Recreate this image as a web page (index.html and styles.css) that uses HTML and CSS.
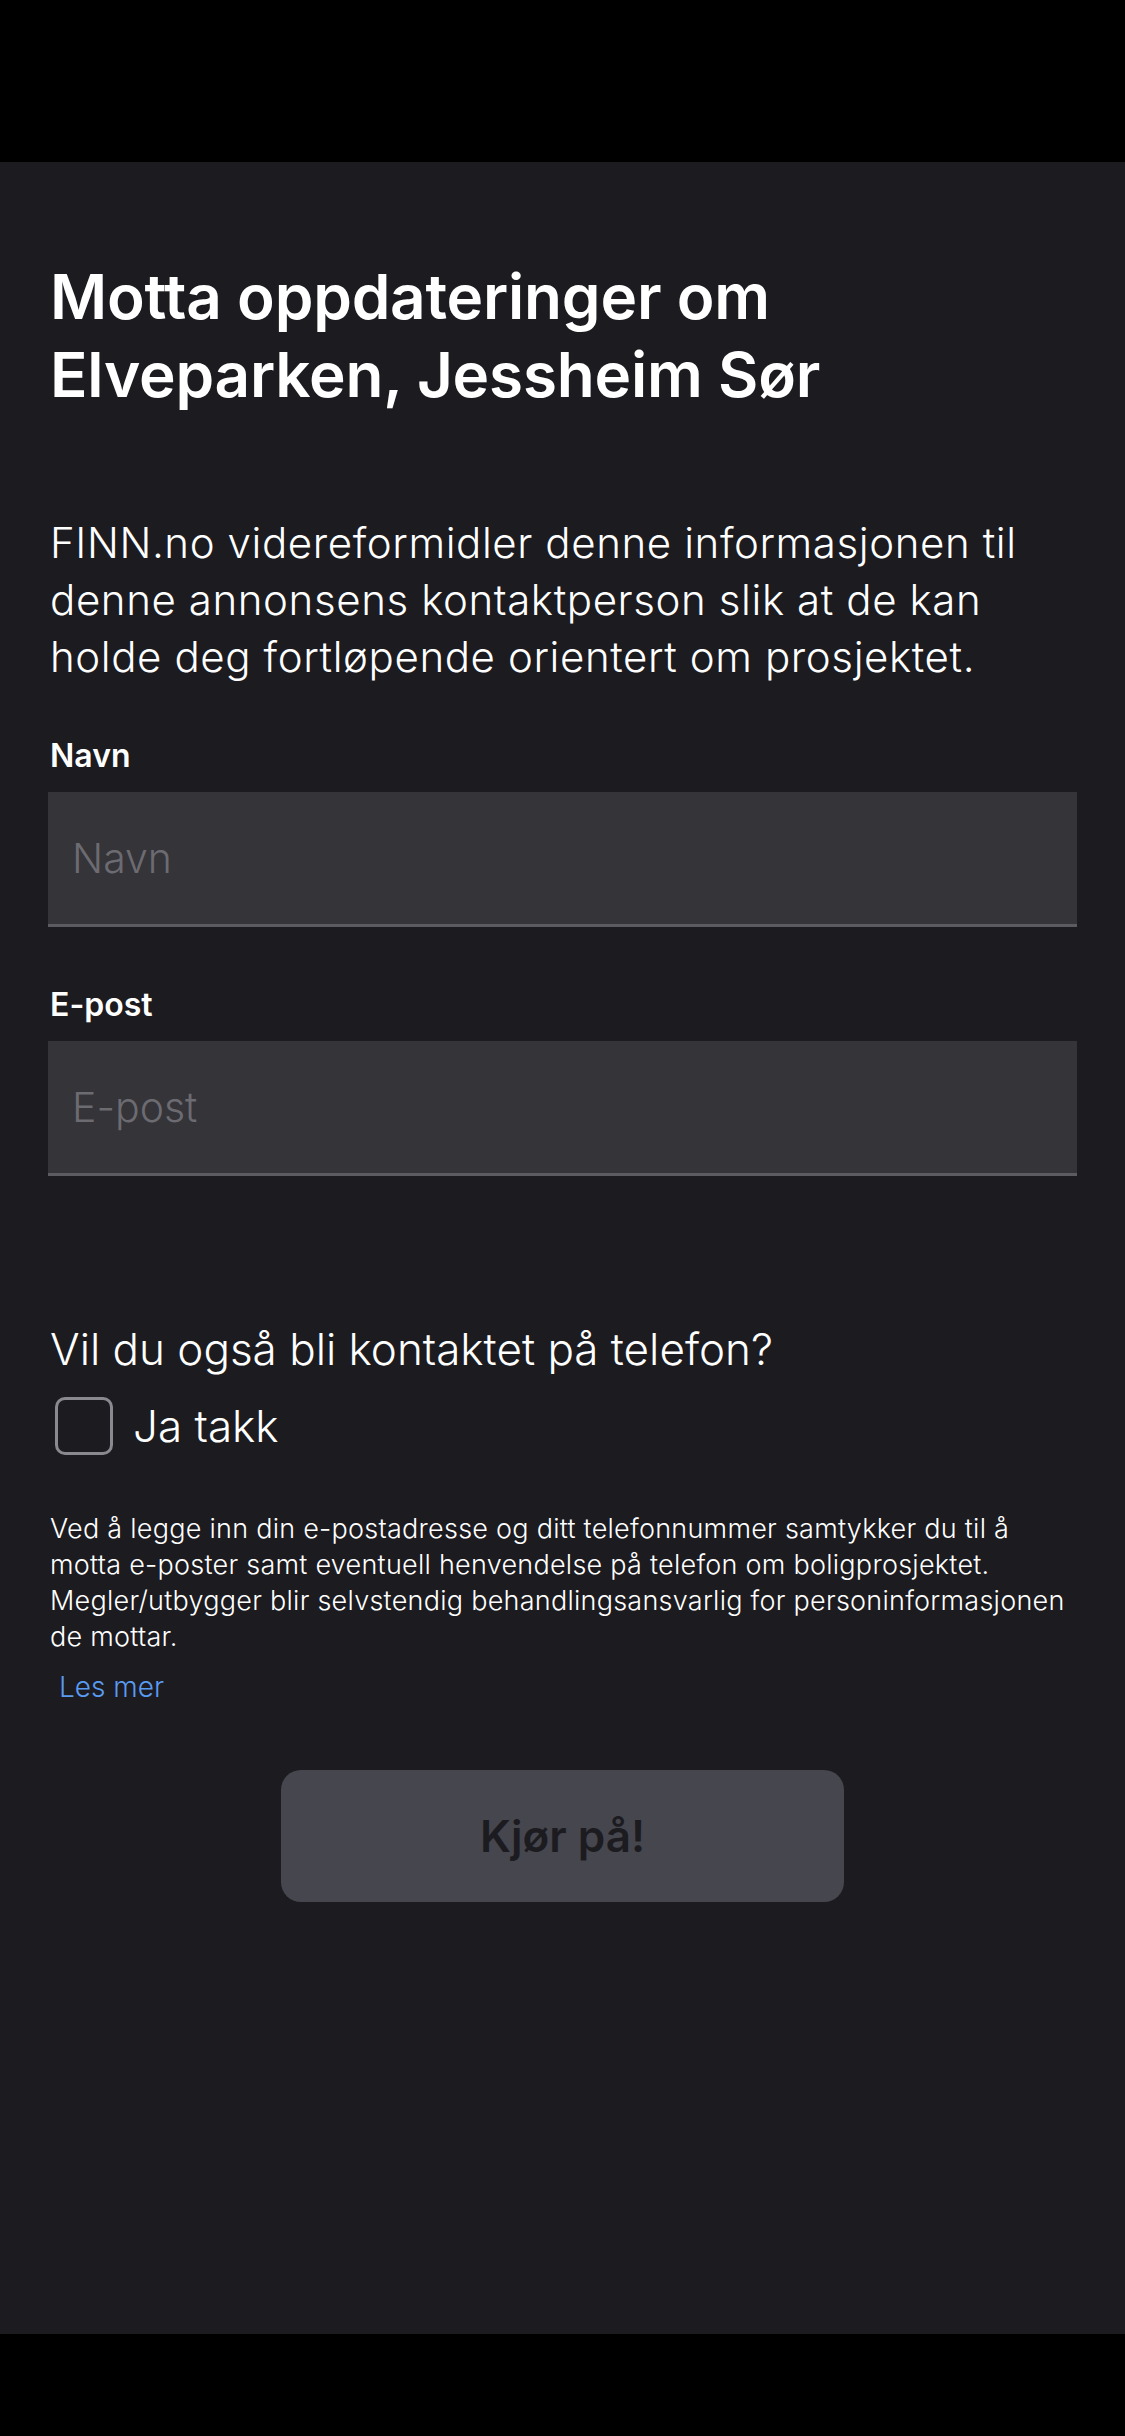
FILE: index.html
```html
<!DOCTYPE html>
<html lang="no">
<head>
<meta charset="utf-8">
<title>Motta oppdateringer</title>
<link rel="stylesheet" href="styles.css">
</head>
<body>
<div class="status-bar"></div>
<main class="sheet">
  <h1 class="title">Motta oppdateringer om Elveparken, Jessheim Sør</h1>
  <p class="intro">FINN.no videreformidler denne informasjonen til denne annonsens kontaktperson slik at de kan holde deg fortløpende orientert om prosjektet.</p>
  <div class="field">
    <label class="label">Navn</label>
    <div class="input"><span class="placeholder">Navn</span></div>
  </div>
  <div class="field">
    <label class="label">E-post</label>
    <div class="input"><span class="placeholder">E-post</span></div>
  </div>
  <p class="question">Vil du også bli kontaktet på telefon?</p>
  <div class="check-row">
    <span class="checkbox"></span>
    <span class="check-label">Ja takk</span>
  </div>
  <p class="disclaimer">Ved å legge inn din e-postadresse og ditt telefonnummer samtykker du til å motta e-poster samt eventuell henvendelse på telefon om boligprosjektet. Megler/utbygger blir selvstendig behandlingsansvarlig for personinformasjonen de mottar.</p>
  <a class="more">Les mer</a>
  <div class="actions">
    <button class="submit">Kjør på!</button>
  </div>
</main>
<div class="home-bar"></div>
</body>
</html>
```

FILE: styles.css
```css
html, body {
  margin: 0;
  padding: 0;
  background: #000;
}
body {
  width: 1125px;
  height: 2436px;
  font-family: Inter, "Noto Sans", sans-serif;
  color: #fff;
  display: flex;
  flex-direction: column;
}
.status-bar {
  height: 162px;
  background: #000;
  flex: none;
}
.sheet {
  height: 2172px;
  flex: none;
  background: #1c1b20;
  box-sizing: border-box;
  padding: 96px 48px 0 48px;
  display: flex;
  flex-direction: column;
}
.home-bar {
  height: 102px;
  background: #000;
  flex: none;
}
.title {
  margin: 0;
  font-size: 62px;
  line-height: 78px;
  font-weight: 600;
  letter-spacing: -0.2px;
  padding-left: 2px;
}
.intro {
  margin: 100px 0 51px 0;
  font-size: 42px;
  line-height: 57px;
  font-weight: 300;
  letter-spacing: 0.6px;
  padding-left: 2px;
}
.field {
  display: flex;
  flex-direction: column;
}
.field + .field {
  margin-top: 58px;
}
.label {
  font-size: 32px;
  line-height: 40px;
  font-weight: 600;
  padding-left: 2px;
  margin-bottom: 16px;
}
.input {
  height: 132px;
  background: #353439;
  border-bottom: 3px solid #5c5b62;
  display: flex;
  align-items: center;
  padding-left: 24px;
}
.placeholder {
  font-size: 41px;
  font-weight: 300;
  color: #6c6b71;
}
.question {
  margin: 145px 0 0 0;
  font-size: 44px;
  line-height: 56px;
  font-weight: 300;
  padding-left: 2px;
}
.check-row {
  display: flex;
  align-items: center;
  gap: 20px;
  margin-top: 20px;
  padding-left: 7px;
}
.checkbox {
  width: 52px;
  height: 52px;
  border: 3px solid #8a898f;
  border-radius: 10px;
}
.check-label {
  font-size: 44px;
  font-weight: 300;
}
.disclaimer {
  margin: 56px 0 0 0;
  font-size: 27px;
  line-height: 36px;
  font-weight: 300;
  letter-spacing: 0.25px;
  padding-left: 2px;
}
.more {
  margin-top: 14px;
  padding-left: 11px;
  font-size: 28px;
  line-height: 36px;
  font-weight: 300;
  color: #5a9bf2;
}
.actions {
  display: flex;
  justify-content: center;
  margin-top: 65px;
}
.submit {
  width: 563px;
  height: 132px;
  border: none;
  border-radius: 20px;
  background: #46464e;
  color: #1c1b20;
  font-family: Inter, "Noto Sans", sans-serif;
  font-size: 44px;
  font-weight: 600;
}
```
